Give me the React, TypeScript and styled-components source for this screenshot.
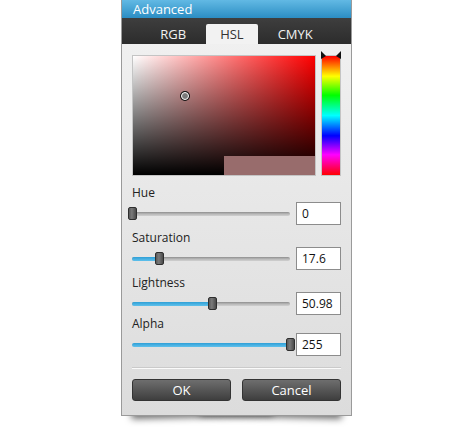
import React from "react";
import styled, { createGlobalStyle } from "styled-components";

const Global = createGlobalStyle`
  html { background: #ffffff; }
  body { margin: 0; font-family: "Open Sans", "Noto Sans", sans-serif; }
`;

const Page = styled.div`
  width: 475px;
  height: 436px;
  padding-left: 121px;
  box-sizing: border-box;
`;

const Panel = styled.div`
  position: relative;
  width: 231px;
  box-sizing: border-box;
  border: 1px solid #9a9a9a;
  border-top: none;
  background: linear-gradient(#f2f2f2, #dcdcdc);
  &::before,
  &::after {
    content: "";
    position: absolute;
    z-index: -1;
    bottom: 8px;
    width: 62%;
    height: 20px;
    box-shadow: 0 10px 7px rgba(0, 0, 0, 0.6);
  }
  &::before { left: 9px; transform: rotate(-1.5deg); }
  &::after { right: 9px; transform: rotate(1.5deg); }
`;

const TitleBar = styled.div`
  height: 18px;
  padding-left: 11px;
  background: linear-gradient(#62b9e4, #2b8dc3);
  color: #ffffff;
  font-size: 13px;
  line-height: 18px;
`;

const TabBar = styled.div`
  height: 26px;
  box-sizing: border-box;
  padding-top: 6px;
  background: linear-gradient(#3e3e3e, #2c2c2c);
  display: flex;
  justify-content: center;
  align-items: flex-end;
  gap: 6px;
`;

const Tab = styled.div<{ $active?: boolean }>`
  height: 20px;
  padding: 0 14px;
  font-size: 13px;
  line-height: 21px;
  border-radius: 2px 2px 0 0;
  color: ${(p) => (p.$active ? "#333333" : "#f2f2f2")};
  background: ${(p) => (p.$active ? "#f2f2f2" : "transparent")};
`;

const Content = styled.div`
  padding: 11px 10px 14px 10px;
  display: flex;
  flex-direction: column;
`;

const PickerRow = styled.div`
  display: flex;
  gap: 5px;
  height: 121px;
`;

const ColorSquare = styled.div`
  position: relative;
  flex: 1;
  border: 1px solid #c4c4c4;
  background: linear-gradient(to bottom, rgba(0, 0, 0, 0), #000000),
    linear-gradient(to right, #ffffff, #ff0000);
`;

const Swatch = styled.div<{ $color: string }>`
  position: absolute;
  right: 0;
  bottom: 0;
  width: 91px;
  height: 19px;
  background: ${(p) => p.$color};
`;

const Cursor = styled.div`
  position: absolute;
  width: 6px;
  height: 6px;
  border-radius: 50%;
  background: #7a7a7a;
  border: 1.5px solid #ffffff;
  box-shadow: 0 0 0 1px #111111;
  transform: translate(-50%, -50%);
`;

const HueWrap = styled.div`
  position: relative;
  width: 20px;
`;

const HueBar = styled.div`
  height: 100%;
  box-sizing: border-box;
  border: 1px solid #c4c4c4;
  background: linear-gradient(
    to bottom,
    #ff0000 0%,
    #ffff00 17%,
    #00ff00 33%,
    #00ffff 50%,
    #0000ff 67%,
    #ff00ff 83%,
    #ff0000 100%
  );
`;

const Marker = styled.svg`
  position: absolute;
  top: -4px;
  left: 0;
`;

const Group = styled.div<{ $gap: number }>`
  margin-top: ${(p) => p.$gap}px;
`;

const Label = styled.div`
  font-size: 12px;
  line-height: 18px;
  color: #222222;
`;

const ControlRow = styled.div`
  display: flex;
  align-items: center;
  gap: 6px;
  height: 23px;
`;

const Slider = styled.div`
  position: relative;
  flex: 1;
  height: 23px;
`;

const Track = styled.div`
  position: absolute;
  left: 0;
  right: 0;
  top: 10px;
  height: 4px;
  border-radius: 2px;
  background: linear-gradient(#8e8e8e, #b8b8b8 50%, #d0d0d0);
  overflow: hidden;
`;

const Fill = styled.div`
  height: 100%;
  background: linear-gradient(#2f9fd6, #5fc1ec);
`;

const Thumb = styled.div`
  position: absolute;
  top: 5px;
  width: 9px;
  height: 13px;
  box-sizing: border-box;
  margin-left: -4.5px;
  border: 1px solid #2e2e2e;
  border-radius: 2px;
  background: linear-gradient(to right, #5a5a5a, #7a7a7a 40%, #4a4a4a);
`;

const ValueBox = styled.div`
  width: 45px;
  height: 23px;
  box-sizing: border-box;
  border: 1px solid #8c8c8c;
  background: #ffffff;
  font-size: 12px;
  line-height: 21px;
  padding-left: 5px;
  color: #111111;
`;

const Separator = styled.div`
  margin-top: 11px;
  height: 1px;
  background: #cacaca;
  border-bottom: 1px solid #fafafa;
`;

const Buttons = styled.div`
  margin-top: 10px;
  display: grid;
  grid-template-columns: 1fr 1fr;
  gap: 11px;
`;

const Button = styled.div`
  height: 22px;
  box-sizing: border-box;
  border: 1px solid #333333;
  border-radius: 3px;
  background: linear-gradient(#6e6e6e, #3e3e3e);
  color: #ffffff;
  font-size: 13px;
  line-height: 20px;
  text-align: center;
`;

const rows = [
  { label: "Hue", value: "0", pct: 0, gap: 8 },
  { label: "Saturation", value: "17.6", pct: 0.176, gap: 4 },
  { label: "Lightness", value: "50.98", pct: 0.5098, gap: 4 },
  { label: "Alpha", value: "255", pct: 1, gap: 0 },
];

export default function App() {
  return (
    <>
      <Global />
      <Page>
        <Panel>
          <TitleBar>Advanced</TitleBar>
          <TabBar>
            <Tab>RGB</Tab>
            <Tab $active>HSL</Tab>
            <Tab>CMYK</Tab>
          </TabBar>
          <Content>
            <PickerRow>
              <ColorSquare>
                <Swatch $color="#986c6c" />
                <Cursor style={{ left: "28.5%", top: "34%" }} />
              </ColorSquare>
              <HueWrap>
                <HueBar />
                <Marker width="20" height="8" viewBox="0 0 20 8">
                  <polygon points="0,0 5,5 0,8" fill="#111" />
                  <polygon points="20,0 15,5 20,8" fill="#111" />
                </Marker>
              </HueWrap>
            </PickerRow>
            {rows.map((r) => (
              <Group key={r.label} $gap={r.gap}>
                <Label>{r.label}</Label>
                <ControlRow>
                  <Slider>
                    <Track>
                      <Fill style={{ width: `${r.pct * 100}%` }} />
                    </Track>
                    <Thumb style={{ left: `${r.pct * 100}%` }} />
                  </Slider>
                  <ValueBox>{r.value}</ValueBox>
                </ControlRow>
              </Group>
            ))}
            <Separator />
            <Buttons>
              <Button>OK</Button>
              <Button>Cancel</Button>
            </Buttons>
          </Content>
        </Panel>
      </Page>
    </>
  );
}
